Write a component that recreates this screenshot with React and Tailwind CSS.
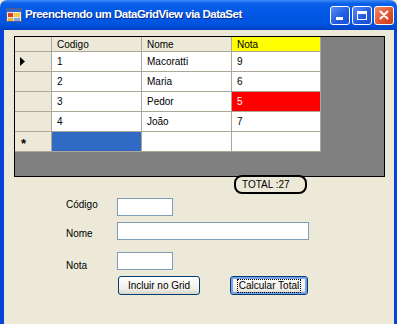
export default function App() {
  const rows = [
    ["1", "Macoratti", "9"],
    ["2", "Maria", "6"],
    ["3", "Pedor", "5"],
    ["4", "João", "7"],
  ];
  const cell = "h-[20px] border-r border-b border-[#aca899] bg-white pl-[5px] flex items-center text-[10px] text-black";
  const hdr = "h-[15px] border-r border-b border-[#aca899] bg-[#ece9d8] pl-[5px] flex items-center text-[10px] text-black";
  const rh = "h-[20px] border-r border-b border-[#aca899] bg-[#ece9d8] flex items-center pl-[5px]";
  return (
    <div className="w-[397px] h-[324px] overflow-hidden bg-[#ece9d8] font-['Liberation_Sans',Arial,sans-serif] flex flex-col">
      {/* Title bar */}
      <div className="h-[30px] shrink-0 rounded-t-[7px] bg-[linear-gradient(to_bottom,#3d8cf7_0%,#0b5fe8_12%,#0058e6_45%,#0054df_80%,#0042c4_100%)] flex items-center pl-[6px] pr-[3px]">
        <svg width="16" height="16" viewBox="0 0 16 16" className="shrink-0">
          <rect x="0.5" y="1.5" width="15" height="13" fill="#dfe4ee" stroke="#4a5f8c" />
          <rect x="1" y="2" width="14" height="3" fill="#3a64c8" />
          <rect x="2" y="6" width="5" height="4" fill="#e03c28" />
          <rect x="8" y="6" width="6" height="4" fill="#f5c93a" />
          <rect x="2" y="11" width="5" height="3" fill="#f0b030" />
          <rect x="8" y="11" width="6" height="3" fill="#8aa6d8" />
        </svg>
        <span className="ml-[3px] text-white font-bold text-[11.5px] tracking-[-0.5px] [text-shadow:1px_1px_0_#0a2a8a] whitespace-nowrap">
          Preenchendo um DataGridView via DataSet
        </span>
        <div className="ml-auto flex gap-[2px] items-center">
          <div className="w-[20px] h-[19px] rounded-[3px] border border-white bg-[linear-gradient(135deg,#5b8ef5,#2058e0_60%,#1a4fd6)] flex items-end pl-[5px] pb-[4px]">
            <div className="w-[7px] h-[3px] bg-white" />
          </div>
          <div className="w-[20px] h-[19px] rounded-[3px] border border-white bg-[linear-gradient(135deg,#5b8ef5,#2058e0_60%,#1a4fd6)] flex items-center justify-center">
            <div className="w-[10px] h-[9px] border border-white border-t-[3px]" />
          </div>
          <div className="w-[20px] h-[19px] rounded-[3px] border border-white bg-[linear-gradient(135deg,#f08a64,#e0502c_60%,#c83c1c)] flex items-center justify-center">
            <svg width="10" height="10" viewBox="0 0 10 10">
              <path d="M1.5 1.5 L8.5 8.5 M8.5 1.5 L1.5 8.5" stroke="white" strokeWidth="2" strokeLinecap="round" />
            </svg>
          </div>
        </div>
      </div>

      {/* Body */}
      <div className="flex-1 border-l-[4px] border-r-[3px] border-[#0843d7] bg-[#ece9d8] flex flex-col">
        {/* Grid */}
        <div className="ml-[10px] mt-[6px] w-[371px] h-[141px] border border-black bg-[#808080] flex flex-col items-start">
          <div className="grid grid-cols-[37px_90px_90px_89px] w-[306px] bg-white">
            <div className={hdr} />
            <div className={hdr}>Codigo</div>
            <div className={hdr}>Nome</div>
            <div className={hdr + " !bg-[#ffff00]"}>Nota</div>
            {rows.map((r, i) => [
              <div key={"h" + i} className={rh}>
                {i === 0 && (
                  <svg width="5" height="9" viewBox="0 0 5 9">
                    <path d="M0 0 L5 4.5 L0 9 Z" fill="black" />
                  </svg>
                )}
              </div>,
              <div key={"a" + i} className={cell}>{r[0]}</div>,
              <div key={"b" + i} className={cell}>{r[1]}</div>,
              <div key={"c" + i} className={cell + (r[2] === "5" ? " !bg-[#ff0000] !text-white" : "")}>{r[2]}</div>,
            ])}
            <div className={rh + " pl-[6px] text-[13px] font-bold leading-none pt-[4px]"}>*</div>
            <div className={cell + " !bg-[#316ac5]"} />
            <div className={cell} />
            <div className={cell} />
          </div>
        </div>

        {/* Total */}
        <div className="ml-[230px] mt-[-2px] w-[73px] h-[19px] border-2 border-black rounded-[8px] bg-[#ece9d8] flex items-center pl-[6px] text-[10px] text-black">
          TOTAL :27
        </div>

        {/* Form */}
        <div className="ml-[62px] flex flex-col text-[10px] leading-[12px] text-black">
          <div className="mt-[4px] h-[18px] flex items-start">
            <span className="w-[51px] pt-[1px]">Código</span>
            <div className="w-[56px] h-[18px] border border-[#7f9db9] bg-white" />
          </div>
          <div className="mt-[6px] h-[18px] flex items-start">
            <span className="w-[51px] pt-[6px]">Nome</span>
            <div className="w-[192px] h-[18px] border border-[#7f9db9] bg-white" />
          </div>
          <div className="mt-[12px] h-[18px] flex items-start">
            <span className="w-[51px] pt-[8px]">Nota</span>
            <div className="w-[56px] h-[18px] border border-[#7f9db9] bg-white" />
          </div>
          <div className="mt-[6px] ml-[52px] flex gap-[30px]">
            <div className="w-[82px] h-[19px] rounded-[3px] border border-[#003c74] bg-[linear-gradient(to_bottom,#ffffff,#f0efe8_70%,#d8d5c8)] flex items-center justify-center">
              Incluir no Grid
            </div>
            <div className="w-[78px] h-[19px] rounded-[3px] border border-[#003c74] bg-[linear-gradient(to_bottom,#ffffff,#f0efe8_70%,#d8d5c8)] shadow-[inset_0_0_0_2px_#7ba2e7] flex items-center justify-center">
              <span className="outline outline-1 outline-dotted outline-black px-[1px]">Calcular Total</span>
            </div>
          </div>
        </div>
      </div>
    </div>
  );
}
